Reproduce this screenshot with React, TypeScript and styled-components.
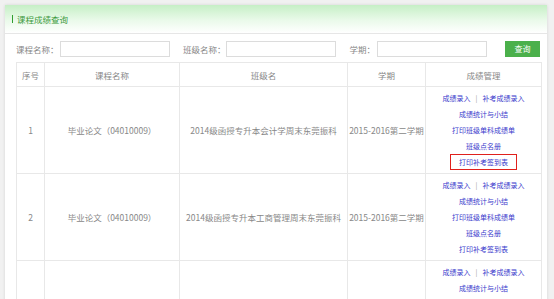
import React from "react";
import styled, { createGlobalStyle } from "styled-components";

const Global = createGlobalStyle`
  html, body { margin: 0; padding: 0; background: #f1f1f1; }
  body { font-family: "Noto Sans CJK SC", "Noto Sans", sans-serif; color: #666; }
`;

const Panel = styled.div`
  margin: 5px 7px 0 5px;
  background: #fff;
  box-shadow: 0 0 3px rgba(0,0,0,0.12);
  height: 300px;
  overflow: hidden;
`;

const Header = styled.div`
  height: 28px;
  border-bottom: 1px solid #e6e6e6;
  background: linear-gradient(to bottom, #c6efc6 0%, #eafaea 55%, #ffffff 100%);
  display: flex;
  align-items: center;
  padding-left: 7px;
`;

const Title = styled.div`
  font-size: 8.5px;
  color: #3d9a3d;
  border-left: 1.5px solid #2f9e2f;
  padding-left: 4px;
  line-height: 8px;
  height: 8px;
  display: flex;
  align-items: center;
`;

const Body = styled.div`
  padding: 6px 8px 0 11px;
`;

const SearchRow = styled.div`
  display: flex;
  align-items: center;
  height: 17px;
`;

const Label = styled.span<{ $ml?: number; $w?: number }>`
  font-size: 8.5px;
  color: #888;
  white-space: nowrap;
  flex-shrink: 0;
  margin-left: ${(p) => p.$ml ?? 0}px;
  ${(p) => (p.$w ? `width: ${p.$w}px;` : "")}
`;

const Input = styled.div<{ $w: number; $ml: number }>`
  flex-shrink: 0;
  width: ${(p) => p.$w}px;
  height: 14px;
  border: 1px solid #dcdcdc;
  margin-left: ${(p) => p.$ml}px;
  box-sizing: content-box;
`;

const Button = styled.div`
  flex-shrink: 0;
  margin-left: 18px;
  width: 35px;
  height: 16px;
  background: #4bb04b;
  color: #fff;
  font-size: 8px;
  display: flex;
  align-items: center;
  justify-content: center;
`;

const Table = styled.table`
  margin-top: 5px;
  border-collapse: collapse;
  width: 520px;
  table-layout: fixed;
  font-size: 8.5px;
  color: #888;
`;

const Th = styled.th<{ $w: number }>`
  width: ${(p) => p.$w}px;
  height: 23px;
  border: 1px solid #e8e8e8;
  font-weight: normal;
  padding: 0;
  text-align: center;
`;

const Td = styled.td`
  border: 1px solid #e8e8e8;
  text-align: center;
  vertical-align: middle;
  padding: 0;
  white-space: nowrap;
  height: 86px;
`;

const Links = styled.div`
  display: flex;
  flex-direction: column;
  align-items: center;
  padding: 3px 0 3px;
`;

const LinkLine = styled.div`
  height: 16px;
  line-height: 16px;
  font-size: 7px;
  color: #3a3acc;
  display: flex;
  align-items: center;
`;

const Sep = styled.span`
  color: #999;
  margin: 0 5px;
`;

const Boxed = styled.span<{ $on?: boolean }>`
  display: inline-block;
  line-height: 14px;
  padding: 0 8px;
  border: 1px solid ${(p) => (p.$on ? "#e0201c" : "transparent")};
`;

const LinkCell = ({ boxed }: { boxed?: boolean }) => (
  <Links>
    <LinkLine>
      成绩录入<Sep>|</Sep>补考成绩录入
    </LinkLine>
    <LinkLine>成绩统计与小结</LinkLine>
    <LinkLine>打印班级单科成绩单</LinkLine>
    <LinkLine>班级点名册</LinkLine>
    <LinkLine>
      <Boxed $on={boxed}>打印补考签到表</Boxed>
    </LinkLine>
  </Links>
);

const rows = [
  { n: "1", c: "毕业论文（04010009）", k: "2014级函授专升本会计学周末东莞振科", t: "2015-2016第二学期", boxed: true },
  { n: "2", c: "毕业论文（04010009）", k: "2014级函授专升本工商管理周末东莞振科", t: "2015-2016第二学期" },
  { n: "", c: "", k: "", t: "" },
];

export default function App() {
  return (
    <>
      <Global />
      <Panel>
        <Header>
          <Title>课程成绩查询</Title>
        </Header>
        <Body>
          <SearchRow>
            <Label $w={44}>课程名称：</Label>
            <Input $w={108} $ml={0} />
            <Label $ml={13}>班级名称：</Label>
            <Input $w={108} $ml={0} />
            <Label $ml={14}>学期：</Label>
            <Input $w={108} $ml={2} />
            <Button>查询</Button>
          </SearchRow>
          <Table>
            <thead>
              <tr>
                <Th $w={27}>序号</Th>
                <Th $w={134}>课程名称</Th>
                <Th $w={167}>班级名</Th>
                <Th $w={77}>学期</Th>
                <Th $w={115}>成绩管理</Th>
              </tr>
            </thead>
            <tbody>
              {rows.map((r, i) => (
                <tr key={i}>
                  <Td>{r.n}</Td>
                  <Td>{r.c}</Td>
                  <Td>{r.k}</Td>
                  <Td>{r.t}</Td>
                  <Td>
                    <LinkCell boxed={r.boxed} />
                  </Td>
                </tr>
              ))}
            </tbody>
          </Table>
        </Body>
      </Panel>
    </>
  );
}
